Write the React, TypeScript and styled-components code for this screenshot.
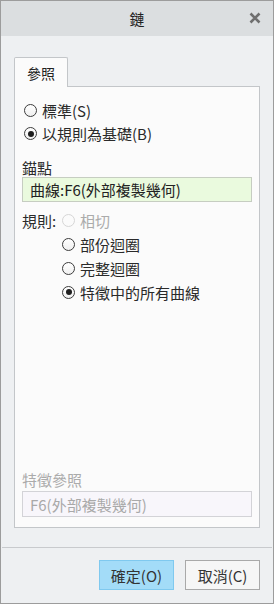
import styled, { createGlobalStyle } from 'styled-components'

const GlobalStyle = createGlobalStyle`
  html, body {
    margin: 0;
    padding: 0;
    background: #eef0f2;
  }
  * {
    box-sizing: border-box;
  }
`

const font = `"Noto Sans CJK TC", "Noto Sans", sans-serif`

export const Window = styled.div`
  width: 274px;
  height: 604px;
  border: 1px solid #9c9c9c;
  background: #eef0f2;
  display: flex;
  flex-direction: column;
  font-family: ${font};
  color: #2a2a2a;
`

export const TitleBar = styled.div`
  height: 35px;
  background: #dbdee0;
  display: flex;
  align-items: center;
  justify-content: center;
  position: relative;
  font-size: 15px;
  color: #222;
`

export const CloseButton = styled.span`
  position: absolute;
  right: 10px;
  top: 9px;
  width: 16px;
  height: 16px;
  display: flex;
  align-items: center;
  justify-content: center;
`

export const Content = styled.div`
  flex: 1;
  display: flex;
  flex-direction: column;
  padding: 21px 13px 19px 13px;
`

export const TabStrip = styled.div`
  display: flex;
`

export const Tab = styled.div`
  position: relative;
  z-index: 1;
  width: 54px;
  height: 30px;
  margin-bottom: -1px;
  border: 1px solid #c3c6c9;
  border-bottom: none;
  border-radius: 2px 2px 0 0;
  background: #fbfbfb;
  font-size: 14px;
  display: flex;
  align-items: center;
  justify-content: center;
  color: #222;
`

export const Panel = styled.div`
  flex: 1;
  border: 1px solid #c3c6c9;
  background: #fbfbfb;
  padding: 12px 7px 10px 7px;
  display: flex;
  flex-direction: column;
`

export const OptionRow = styled.label<{ $indent?: number; $h?: number; $disabled?: boolean }>`
  display: flex;
  align-items: center;
  height: ${(p) => p.$h ?? 23}px;
  padding-left: ${(p) => p.$indent ?? 2}px;
  font-size: 15px;
  color: ${(p) => (p.$disabled ? '#ababab' : '#2a2a2a')};
  gap: 5px;
`

export const Radio = styled.span<{ $checked?: boolean; $disabled?: boolean }>`
  width: 13px;
  height: 13px;
  border-radius: 50%;
  border: 1px solid ${(p) => (p.$disabled ? '#d6d6d6' : '#3c3c3c')};
  background: ${(p) => (p.$disabled ? '#fbfbfb' : 'linear-gradient(#ffffff, #f0f0f0)')};
  display: flex;
  align-items: center;
  justify-content: center;
  flex-shrink: 0;
  &::after {
    content: '';
    display: ${(p) => (p.$checked ? 'block' : 'none')};
    width: 6px;
    height: 6px;
    border-radius: 50%;
    background: #1e1e1e;
  }
`

export const FieldLabel = styled.div<{ $muted?: boolean }>`
  height: 20px;
  display: flex;
  align-items: center;
  font-size: 15px;
  color: ${(p) => (p.$muted ? '#ababab' : '#2a2a2a')};
`

export const Field = styled.div<{ $variant: 'active' | 'disabled' }>`
  height: ${(p) => (p.$variant === 'active' ? 25 : 26)}px;
  border: 1px solid ${(p) => (p.$variant === 'active' ? '#c6cdc1' : '#d3d3d7')};
  background: ${(p) => (p.$variant === 'active' ? '#eafade' : '#f8f6fb')};
  color: ${(p) => (p.$variant === 'active' ? '#222' : '#a9a9a9')};
  font-size: 15px;
  display: flex;
  align-items: center;
  padding-left: 7px;
`

export const RuleBlock = styled.div`
  margin-top: 6px;
  display: flex;
  flex-direction: column;
`

export const RuleHead = styled.div`
  display: flex;
  align-items: center;
  height: 24px;
`

export const RuleTitle = styled.span`
  width: 40px;
  font-size: 15px;
  color: #2a2a2a;
`

export const Spacer = styled.div`
  flex: 1;
`

export const Separator = styled.div`
  height: 1px;
  margin: 0 1px;
  background: #c8cacd;
`

export const Footer = styled.div`
  display: flex;
  justify-content: flex-end;
  gap: 11px;
  padding: 12px 13px 13px 13px;
`

export const Button = styled.button<{ $primary?: boolean }>`
  width: 75px;
  height: 30px;
  font-family: ${font};
  font-size: 15px;
  color: #333;
  border: 1px solid ${(p) => (p.$primary ? '#7fc9ef' : '#a9a9a9')};
  background: ${(p) => (p.$primary ? '#a3dcf8' : '#f6f6f6')};
  padding: 0;
  cursor: pointer;
`

export default function App() {
  return (
    <>
      <GlobalStyle />
      <Window>
        <TitleBar>
          鏈
          <CloseButton>
            <svg width="12" height="12" viewBox="0 0 12 12">
              <path d="M1.5 1.5 L10.5 10.5 M10.5 1.5 L1.5 10.5" stroke="#6f6f6f" strokeWidth="2.6" />
            </svg>
          </CloseButton>
        </TitleBar>

        <Content>
          <TabStrip>
            <Tab>參照</Tab>
          </TabStrip>
          <Panel>
            <OptionRow>
              <Radio />
              標準(S)
            </OptionRow>
            <OptionRow>
              <Radio $checked />
              以規則為基礎(B)
            </OptionRow>

            <FieldLabel style={{ marginTop: 12 }}>錨點</FieldLabel>
            <Field $variant="active">曲線:F6(外部複製幾何)</Field>

            <RuleBlock>
              <RuleHead>
                <RuleTitle>規則:</RuleTitle>
                <OptionRow $indent={0} $h={24} $disabled>
                  <Radio $disabled />
                  相切
                </OptionRow>
              </RuleHead>
              <OptionRow $indent={40} $h={24}>
                <Radio />
                部份迴圈
              </OptionRow>
              <OptionRow $indent={40} $h={24}>
                <Radio />
                完整迴圈
              </OptionRow>
              <OptionRow $indent={40} $h={24}>
                <Radio $checked />
                特徵中的所有曲線
              </OptionRow>
            </RuleBlock>

            <Spacer />
            <FieldLabel $muted>特徵參照</FieldLabel>
            <Field $variant="disabled" style={{ marginTop: 2 }}>F6(外部複製幾何)</Field>
          </Panel>
        </Content>

        <Separator />
        <Footer>
          <Button $primary>確定(O)</Button>
          <Button>取消(C)</Button>
        </Footer>
      </Window>
    </>
  )
}
